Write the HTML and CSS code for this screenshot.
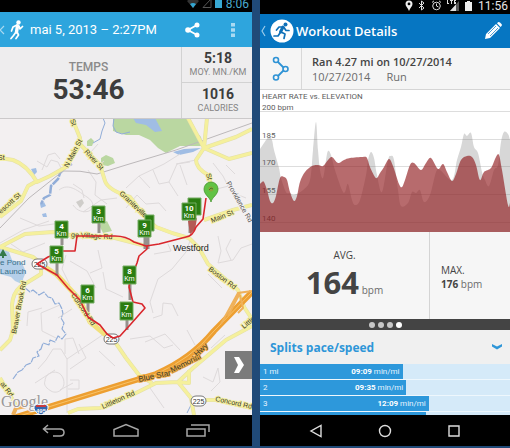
FILE: index.html
```html
<!DOCTYPE html>
<html lang="en">
<head>
<meta charset="utf-8">
<title>Workout screens</title>
<link rel="stylesheet" href="styles.css">
</head>
<body>
<main class="screens">
  <section class="phone phone-map" lang="fr">
    <div class="status status-map">
      <svg width="12" height="12" viewBox="0 0 12 12"><path d="M0 1a9 9 0 0 1 12 0L6 8z" fill="#333"/><path d="M3 4a5 5 0 0 1 6 0L6 8z" fill="#33a5d0"/></svg>
      <svg width="10" height="12" viewBox="0 0 10 12"><path d="M1 7.500 9 -1V7.500z" fill="none" stroke="#555"/></svg>
      <svg width="8" height="12" viewBox="0 0 8 12"><path d="M0 0h7v8H0z" fill="#38a8d4"/></svg>
      <span>8:06</span>
    </div>
    <header class="bar bar-map">
      <button class="icon back" aria-label="Retour"><svg width="6" height="12" viewBox="0 0 6 12"><path d="M4 2 0 6l4 4" fill="none" stroke="#a9d9f0" stroke-width="1.200"/></svg></button>
      <svg class="runner" width="14" height="20" viewBox="0 0 14 20"><circle cx="8.500" cy="2.500" r="2.200" fill="#fff"/><g fill="none" stroke="#fff" stroke-linecap="round" stroke-linejoin="round"><path d="M7.500 6 6.500 12" stroke-width="3.400"/><path d="m7 5-4 2-1.500 4M9 6l1 3 2.500-2.500M6 12l-2.500 3.500-2.500 3M7 12l1.500 3-2.500 3.500" stroke-width="1.700"/></g></svg>
      <h1 class="bar-title">mai 5, 2013 – 2:27PM</h1>
      <button class="icon share" aria-label="Partager"><svg width="15" height="16" viewBox="0 0 15 16"><path d="M12 3 3 8l9 5" fill="none" stroke="#fff" stroke-width="1.800"/><g fill="#fff"><circle cx="12" cy="3" r="2.500"/><circle cx="3" cy="8" r="2.800"/><circle cx="12" cy="13" r="2.500"/></g></svg></button>
      <button class="icon" aria-label="Menu"><svg width="4" height="16" viewBox="0 0 4 16"><path d="M0 1h4v3.500H0zM0 6.300h4v3.500H0zM0 11.600h4v3.500H0z" fill="#a9daf2"/></svg></button>
    </header>
    <div class="summary">
      <div class="summary-main"><span class="time-label">TEMPS</span><strong class="time">53:46</strong></div>
      <div class="summary-side">
        <div class="metric"><strong>5:18</strong><span>MOY. MN./KM</span></div>
        <div class="metric"><strong>1016</strong><span>CALORIES</span></div>
      </div>
    </div>
    <div class="map">
      <svg class="map-art" viewBox="0 118 252 297" role="img" aria-label="Westford">
        <path fill="#f3f0f1" d="M0 118h252v297H0z"/>
        <g fill="#bad7a1">
          <path d="M113 118h74l5 9 9 10 2 9-23 0-14 7-8-5-8-8-11-5-13 0-13-4z"/>
          <path d="m101 158 5-3 7 3 2 5-7 3-7-1zM87 141l4-3 3 3-2 5h-5zM99 225l8-4 5 10-9 2z"/>
        </g>
        <path fill="#cfcdca" d="m76 202 6-3 2 4-4 5z"/>
        <g fill="#a0bde4">
          <path d="M133 118h22l7 13-7 1-9-7-10-2zM173 152l11-3 17-1-8 4-14 3zM31 169l5-1 1 4-3 3zM40 204l4-2 2 4-5 2zM42 214l4-1 1 4h-4z"/>
          <path fill="#b4cfe9" d="m0 248 9 4 3 8 10 3 4 9-3 7 1 6-9-4-4-4-11-3z"/>
        </g>
        <g fill="none" stroke="#91add8" stroke-linejoin="round">
          <path stroke-width="2.500" d="m72 164-6 3-6 6-2 6-7 7-1 9-6 3-3 6" stroke-dasharray="9 1"/>
          <path stroke-width="1.200" d="m24 287 6 5 3-2 6 5 5-3 4 5 4 1 3 6 4-1 3 6 1 5-2 4 3 5-2 6 4 5-4 5-4-3-3 6-5-2-1 5-6-2-2 6-4 3 2 4-6 2-2 5-5 2-4 5-4 2-5 7" stroke-dasharray="8 1"/>
          <path stroke-width="1" d="m103 118 2 5-3 8-2 8-7 4M114 118l-1 8 3 6 6 2 8-2M187 413l4-8 1-9"/>
        </g>
        <g fill="none" stroke="#dedadb" stroke-width="1">
          <path d="m37 161 10 6 4-7 7 2 4 8M42 170l6-15 7-2 5 6M98 144l-8 9-6-2M90 160l9 5 5-4M59 190c10-8 20 2 28 7s7 12 2 14-12 0-16-6M88 170l8 12-1 13 12 9M73 184l9 6 2 8M83 212l18-12 16-2M126 188l13-12 25-12 16-10M139 176l11 12M153 170l6 14 10-2 9 14M169 182l8-18 13-2M126 208l11-13 9 9 13-1 7 8M180 165l7 20M196 160l-20 4M213 163l10 13 8 16 15 6M226 165l9 9M229 186l-17 4M218 236l3 15-3 12 15-3 8-12 11-4M231 239l-5 10 5 11M191 238l-5 14-14 17-14 10-8 23 3 11M168 244l3 7-17 3M208 274l14 14M153 318l9-3 1-12 9 1 6 12M0 243l23-13 26-9M20 218l19 8 22-3M11 244l12 8 22-9M66 255l-4 14 8 16M70 261l17 10 9 17M98 250l4 18-12 5M60 305l-19 8 1 18 14 7M27 326l1-14 14-4M72 309l-14 9M103 272l3 17 17 8"/>
          <path d="M104 334 67 359l-6-10-8 0-7 11-8 9M67 359l0 54M65 354v-15l8-1 6 16M45 381c0-9 14-13 18-3s-5 17-12 13-7-8-6-10M79 344l7 14-16 11M70 380h9v9H68M130 339l20-3 14 12 9-3M145 342l20-8 15 16M99 351l16 15M195 345l-8-15M203 377l10 5 5-14 2 14-9 9M150 388l14 20M211 348l14-13M60 390l13-7M55 370l-20 13"/>
        </g>
        <path fill="none" stroke="#bcb8ba" d="m0 228 29-30 34-27q17-1 34 3l29-9 50-15 76-27"/>
        <g class="roads-casing"><use href="#roads"/></g>
        <g class="roads">
          <g id="roads">
            <path d="m72 118 8 20-2 10-12 19-16 9-13 6q-10-17-24-22l-13-2M37 181l-9 5-7 15-21 16"/>
            <path d="m79 143 21 22 5 16q3 9 25 16l7 9 9 12 10 9q17 7 33 11l10 10 9 16 30 26 6 17 8 12"/>
            <path d="m188 118 16 30-8 12q0 8 12 15l3 9 0 12M207 118l-3 30 25 11 23-6M204 148l32-11 16-8M204 220l29-10 19-5"/>
            <path d="m0 247 25-13 28-2 22 4 40 2 31 8M0 247l33 10q9 6 8 17l-21 13q-7 6-8 18l1 25-3 10-10 10"/>
            <path d="m68 413 10-4 22-1 30-12 26-13 22-1 15-14 33-28 26-14M126 358l-13-19M126 358l13 17 13 8M189 370v13l-11-1 13 16 3 17M191 400l25 0 36 8M0 378l17 29"/>
          </g>
        </g>
        <path class="concord" d="m39 263 18 12 23 25 10 22 17 14"/>
        <g fill="none" stroke="#efb15a" stroke-width="4">
          <path d="m13 415 3-7 10-2"/>
          <path stroke="#ed9f31" stroke-width="6" d="m16 417 110-34 30-9q35-15 58-43l38-39"/>
          <path stroke="#f7c36a" stroke-width="1" d="m16 417 110-34 30-9q35-15 58-43l38-39"/>
          <path stroke-width="2" d="m221 324 17-31 14-2M228 316l12-23M240 295l3 13-5 5"/>
        </g>
        <g fill="none" stroke="#96918d" stroke-width="3"><path d="M99 223v10M62 238v7M57 262v14M88 303v13M127 319v11M130 284v16M145 237v12M148 232v17M190 219v14"/></g>
        <path fill="#b45a55" d="m188 221 9-3-2 12-5 4z"/>
        <g class="map-text street">
          <text transform="translate(68 168) rotate(-62)">N Main St</text>
          <text transform="translate(84 152) rotate(48)">River St</text>
          <text transform="translate(1 214) rotate(-42)">escott St</text>
          <text transform="translate(-2 160)">St</text><text transform="translate(70 120) rotate(70)">St</text>
          <text transform="translate(119 194) rotate(43)">Graniteville</text>
          <text transform="translate(212 223) rotate(-22)">Main St</text>
          <text transform="translate(206 174) rotate(75)">St</text>
          <text transform="translate(71 237) rotate(3)">ge Village Rd</text>
          <text transform="translate(208 270) rotate(37)">Boston Rd</text>
          <text transform="translate(16 334) rotate(-79)">Beaver Brook Rd</text>
          <text transform="translate(71 295) rotate(56)">Concord Rd</text>
          <text transform="translate(0 384) rotate(53)">at Rd</text>
          <text transform="translate(103 409) rotate(-24)">Littleton Rd</text>
          <text transform="translate(215 401) rotate(12)">Concord Rd</text>
          <text transform="translate(244 329) rotate(-40)">Little</text>
          <text class="hwy" transform="translate(139 382) rotate(-12)">Blue Star</text>
          <text class="hwy" transform="translate(172 373) rotate(-27)">Memorial</text>
          <text class="hwy" transform="translate(197 357) rotate(-43)">Hwy</text>
          <text class="minor" transform="translate(226 183) rotate(60)">Providence Rd</text>
        </g>
        <g class="shield">
          <rect x="32" y="259" width="15" height="10" rx="5"/><text x="39.500" y="267">225</text>
          <rect x="104" y="334" width="15" height="10" rx="5"/><text x="111.500" y="342">225</text>
          <rect x="191" y="396" width="15" height="10" rx="5"/><text x="198.500" y="404">225</text>
        </g>
        <path class="route" d="M206 198 203 219 196 227Q193 236 186 237L159 244 146 246 134 242Q126 236 115 236L77 236 75 251H63L48 257 37 264 57 275 68 288 80 300 88 317 100 325 107 334 113 338 120 336 130 325 145 308 142 304 133 302 129 287 130 280 137 263 139 256 147 249V246"/>
        <g class="map-text water"><text x="0" y="265">e Pond</text><text x="0" y="274">Launch</text></g>
        <path fill="#357a4b" d="m3 249 4 7H4v2H2v-2h-3z"/>
        <text class="map-text town" x="173" y="251">Westford</text>
        <text class="google" x="1" y="407">Google</text>
        <path fill="#3567ae" stroke="#fff" d="m34 406 3-2 4 1 4-1 3 2q1 6-7 9-8-3-7-9z"/><path fill="#c73d40" d="M36 405h10v2H36z"/><text class="interstate" x="41" y="413">495</text>
        <g class="flags">
          <path d="M188 198h13v17h-13zM145 215h9v16h-9z"/>
          <path d="M92 206h13v17H92zM55 221h13v17H55zM50 246h13v17H50zM81 285h13v18H81zM120 302h13v18h-13zM123 266h13v18h-13zM138 220h13v17h-13zM182 203h14v17h-14z"/>
        </g>
        <g class="flag-text">
          <text x="98.500" y="214">3<tspan x="98.500" dy="7">Km</tspan></text>
          <text x="61.500" y="229">4<tspan x="61.500" dy="7">Km</tspan></text>
          <text x="56.500" y="254">5<tspan x="56.500" dy="7">Km</tspan></text>
          <text x="87.500" y="293">6<tspan x="87.500" dy="7">Km</tspan></text>
          <text x="126.500" y="310">7<tspan x="126.500" dy="7">Km</tspan></text>
          <text x="129.500" y="274">8<tspan x="129.500" dy="7">Km</tspan></text>
          <text x="144.500" y="228">9<tspan x="144.500" dy="7">Km</tspan></text>
          <text x="189" y="211">10<tspan x="189" dy="7">Km</tspan></text>
        </g>
        <path fill="#62c244" stroke="#46962f" stroke-width=".8" d="M211 202c-1-5-7-7-7-13a7 7 0 0 1 14 0c0 6-6 8-7 13z"/><circle cx="211" cy="189" r="2.500" fill="#8aa63a"/><path fill="none" stroke="#427c2b" d="m209 190 2-2 2 1"/>
        <path fill="#cbc9ca" d="M0 118h252v1H0z"/>
      </svg>
      <button class="next" aria-label="Suivant"><svg width="12" height="18" viewBox="0 0 12 18"><path d="M1 1h5l5 8-5 8H1l4-8z" fill="#fff"/></svg></button>
    </div>
    <nav class="nav nav-map">
      <button class="icon" aria-label="Back"><svg width="24" height="16" viewBox="0 0 24 16"><path d="M6 2 1.500 6 6 10M2 6h16q4 0 4 3.500T18 13h-7" fill="none" stroke="#a7a7a7" stroke-width="1.500"/></svg></button>
      <button class="icon" aria-label="Home"><svg width="26" height="16" viewBox="0 0 26 16"><path d="M1 13V6.500l12-5 12 5V13z" fill="none" stroke="#a7a7a7" stroke-width="1.500"/></svg></button>
      <button class="icon" aria-label="Recent apps"><svg width="24" height="16" viewBox="0 0 24 16"><path d="M1 6h18v7H1zM5 2h18v7" fill="none" stroke="#a7a7a7" stroke-width="1.500"/></svg></button>
    </nav>
  </section>

  <section class="phone phone-workout">
    <div class="status status-workout">
      <svg width="8" height="12" viewBox="0 0 8 12"><path fill="#eee" fill-rule="evenodd" d="M4 11C3 8 .500 6.500.500 4a3.500 3.500 0 0 1 7 0C7.500 6.500 5 8 4 11zM4 2.500a1.400 1.400 0 1 0 0 2.800 1.400 1.400 0 0 0 0-2.800z"/></svg>
      <svg width="8" height="12" viewBox="0 0 8 12"><path fill="none" stroke="#ddd" d="m1 3 5 5-2.500 2V1L6 3 1 8"/></svg>
      <svg width="11" height="12" viewBox="0 0 11 12"><g fill="none" stroke="#ddd"><circle cx="5.500" cy="6" r="3.800"/><path d="M5.500 3.500V6l2 1M1 2.500 3 .800M10 2.500 8 .800"/></g></svg>
      <svg width="13" height="12" viewBox="0 0 13 12"><path fill="#555" d="M12 1v10H3z"/><path fill="#ddd" d="M9 4.500V11H3zM0 0h1v3h1v1H0zM3 0h3v1H5v3H4V1H3zM7 0h2v1H8v1h1v2H7z"/></svg>
      <svg width="8" height="12" viewBox="0 0 8 12"><path fill="#eee" d="M0 2h2V1h3v1h2v9H0z"/></svg>
      <span>11:56</span>
    </div>
    <header class="bar bar-workout">
      <button class="icon back" aria-label="Back"><svg width="6" height="12" viewBox="0 0 6 12"><path d="M5 1 2 6l3 5" fill="none" stroke="#9acbea" stroke-width="1.200"/></svg></button>
      <svg class="logo" width="24" height="24" viewBox="0 0 24 24"><circle cx="12" cy="12" r="11.500" fill="#fff"/><circle cx="15.500" cy="5.500" r="2" fill="#0f70b8"/><g fill="none" stroke="#0f70b8" stroke-linejoin="round" stroke-linecap="round"><path d="m13 8-2.500 5" stroke-width="3"/><path d="M13 8H9l-2.500 3M14 8.500l2 3h3M11 13l4 2-1 4.500M10 14l-2 3H4" stroke-width="1.700"/></g></svg>
      <h1 class="bar-title">Workout Details</h1>
      <button class="icon" aria-label="Edit"><svg width="18" height="18" viewBox="0 0 18 18"><path fill="#fff" d="m1 17 1-5L12 2l4 4L6 16zM13 1.200l1-1q1-.5 2 .3l1.500 1.500q.8 1 0 2l-1 1z"/><path d="m4 12 8-8M6 14l8-8" stroke="#0676c2" stroke-width=".7"/></svg></button>
    </header>
    <div class="workout">
      <div class="workout-icon"><svg width="18" height="26" viewBox="0 0 18 26"><path d="m5 5 8 8-8 8" fill="none" stroke="#2f93d5" stroke-width="1.800"/><g fill="#f5f5f5" stroke="#2f93d5" stroke-width="1.600"><circle cx="4" cy="4" r="2.500"/><circle cx="13.500" cy="13" r="2.500"/><circle cx="4" cy="21.500" r="2.500"/></g></svg></div>
      <div class="workout-text"><strong>Ran 4.27 mi on 10/27/2014</strong><p><span>10/27/2014</span><span>Run</span></p></div>
    </div>
    <svg class="chart" viewBox="260 90 250 142" role="img" aria-label="Heart rate vs. elevation">
      <path id="elevation" class="elevation"/>
      <path class="grid" d="M260 111.500h250M260 139.500h250M260 166.500h250M260 194.500h250M260 222.500h250"/>
      <g class="chart-text">
        <text x="262" y="99">HEART RATE vs. ELEVATION</text><text x="262" y="110">200 bpm</text>
        <text x="262" y="138">185</text><text x="262" y="165">170</text><text x="262" y="193">155</text><text x="262" y="221">140</text>
      </g>
      <path id="heart" class="heart"/>
    </svg>
    <div class="rates">
      <div class="avg"><span class="rate-label">AVG.</span><p><strong>164</strong> <span>bpm</span></p></div>
      <div class="max"><span class="rate-label">MAX.</span><p><strong>176</strong> <span>bpm</span></p></div>
    </div>
    <div class="dots"><i></i><i></i><i></i><i class="on"></i></div>
    <button class="splits-title"><span>Splits pace/speed</span><svg width="10" height="8" viewBox="0 0 10 8"><path d="m0 1 5 2.500L10 1v2.500L5 6.500 0 3.500z" fill="#2e96d8"/></svg></button>
    <ol class="splits">
      <li><div class="split-bar" style="width:57%"><span>1 mi</span><p><b>09:09</b> min/mi</p></div></li>
      <li><div class="split-bar" style="width:58.5%"><span>2</span><p><b>09:35</b> min/mi</p></div></li>
      <li><div class="split-bar" style="width:67.5%"><span>3</span><p><b>12:09</b> min/mi</p></div></li>
      <li class="peek"><div class="split-bar" style="width:66.2%"></div></li>
    </ol>
    <nav class="nav nav-workout">
      <button class="icon" aria-label="Back"><svg width="24" height="16" viewBox="0 0 24 16"><path d="M17 2.500v11L7 8z" fill="none" stroke="#ddd" stroke-width="1.400"/></svg></button>
      <button class="icon" aria-label="Home"><svg width="24" height="16" viewBox="0 0 24 16"><circle cx="12" cy="8" r="5.500" fill="none" stroke="#ddd" stroke-width="1.400"/></svg></button>
      <button class="icon" aria-label="Recent apps"><svg width="24" height="16" viewBox="0 0 24 16"><path d="M7 3h10v10H7z" fill="none" stroke="#ddd" stroke-width="1.400"/></svg></button>
    </nav>
  </section>
</main>
<script src="chart.js"></script>
</body>
</html>
```
FILE: styles.css
```css
* { box-sizing: border-box; }
body { margin: 0; background: #204a78; font-family: Roboto, "Liberation Sans", sans-serif; }
h1, p, ol { margin: 0; padding: 0; font-weight: inherit; }
button { border: 0; padding: 0; background: none; font: inherit; color: inherit; }
svg { display: block; flex: none; }
.icon { display: flex; flex: none; }

.screens { display: grid; grid-template-columns: 252fr 250fr; gap: 8px; padding-bottom: 2px; }
.phone { display: flex; flex-direction: column; min-width: 0; overflow: hidden; background: #f3f3f3; }
.phone-workout { font-family: "Open Sans", "Noto Sans", sans-serif; color: #444; }

.status { display: flex; justify-content: flex-end; background: #000; font-family: Roboto, sans-serif; font-size: 12px; }
.status-map { height: 12px; gap: 3px; padding-right: 3px; line-height: 8px; color: #4aabd0; }
.status-workout { height: 14px; gap: 5px; padding-right: 2px; line-height: 12px; color: #e6e6e6; }

.bar { display: flex; align-items: center; color: #fff; }
.bar-title { flex: 1; font-size: 13px; white-space: nowrap; }
.bar-map { height: 35px; padding-right: 17px; background: #2ea5dd; }
.bar-map .bar-title { margin-left: 6px; }
.runner { margin-left: 4px; }
.share { margin-right: 31px; }
.bar-workout { height: 34px; padding-right: 8px; background: #0676c2; }
.bar-workout .bar-title { font-weight: 600; margin-left: 2px; }
.logo { margin-left: 4px; }

.summary { display: flex; height: 71px; background: #eeedee; color: #3d3d3d; }
.summary-main { flex: 1; display: flex; flex-direction: column; align-items: center; justify-content: center; padding-right: 4px; }
.time-label { font-size: 12px; line-height: 14px; font-weight: 500; color: #8a8a8a; }
.time { font-size: 28px; line-height: 32px; }
.summary-side { width: 71px; display: flex; flex-direction: column; border-left: 1px solid #d2d2d2; }
.metric { flex: 1; display: flex; flex-direction: column; align-items: center; justify-content: center; padding-left: 2px; }
.metric + .metric { border-top: 1px solid #d2d2d2; }
.metric strong { font-size: 14px; line-height: 16px; }
.metric span { font-size: 9px; line-height: 13px; color: #858585; white-space: nowrap; }

.map { position: relative; }
.map-art { width: 100%; height: auto; }
.roads, .roads-casing { fill: none; stroke-linejoin: round; }
.roads-casing { stroke: #e3dfa8; stroke-width: 4px; }
.roads { stroke: #f5f09c; stroke-width: 3px; }
.concord { fill: none; stroke: #f2e17c; stroke-width: 5px; }
.route { fill: none; stroke: #d9262c; stroke-width: 1.6px; stroke-linejoin: round; }
.map-text { font-family: "Liberation Sans", sans-serif; font-size: 7px; fill: #3a3928; }
.street { stroke: #f5efa0; stroke-width: 2px; paint-order: stroke; }
.street .hwy { font-size: 8px; stroke: #efab45; }
.street .minor { stroke: #f3f0f1; fill: #555; }
.water { font-size: 8px; fill: #39718a; }
.town { font-size: 9px; fill: #222; }
.shield rect { fill: #fff; stroke: #777; }
.shield text { font: 7px "Liberation Sans", sans-serif; fill: #333; text-anchor: middle; }
.google { font: 16px "Liberation Serif", serif; fill: #9a9799; stroke: #f5f4f4; stroke-width: 2px; paint-order: stroke; }
.interstate { font: bold 6px "Liberation Sans", sans-serif; fill: #fff; text-anchor: middle; }
.flags { fill: #2b7d11; stroke: #74ad62; stroke-width: 1px; }
.flag-text { font: bold 8px Roboto, sans-serif; fill: #fff; text-anchor: middle; }
.flag-text tspan { font-weight: 400; font-size: 7px; }
.next { position: absolute; right: 0; bottom: 36px; width: 27px; height: 28px; display: flex; align-items: center; justify-content: center; background: #7b7b7b; }

.nav { display: flex; align-items: center; justify-content: space-between; height: 31px; padding: 0 42px; background: #000; }
.nav-workout { padding: 0 44px; }

.workout { display: flex; height: 42px; background: #f5f5f5; border-bottom: 1px solid #d5d5d5; }
.workout-icon { width: 42px; display: flex; align-items: center; justify-content: center; border-right: 1px solid #d8d8d8; }
.workout-text { padding: 6px 0 0 10px; font-size: 11px; line-height: 15px; white-space: nowrap; }
.workout-text strong { font-weight: 600; display: block; }
.workout-text p { display: flex; gap: 16px; color: #6b6b6b; }

.chart { width: 100%; height: auto; background: #fff; }
.elevation { fill: #d7d7d7; }
.heart { fill: rgba(145, 28, 30, .65); }
.grid { stroke: rgba(120, 120, 120, .25); }
.chart-text { font: 8px Roboto, sans-serif; fill: #5d5d5d; }

.rates { display: flex; height: 87px; background: #f6f6f6; }
.rates p { white-space: nowrap; }
.rates p span { color: #6c6c6c; }
.rate-label { font-size: 10px; line-height: 14px; }
.avg { width: 68%; display: flex; flex-direction: column; align-items: center; padding-top: 16px; border-right: 1px solid #d4d4d4; }
.avg p { font-size: 10px; line-height: 40px; }
.avg strong { font-size: 31px; }
.max { display: flex; flex-direction: column; padding: 31px 0 0 11px; }
.max p { font-size: 10px; line-height: 14px; }

.dots { display: flex; justify-content: center; align-items: center; gap: 3px; height: 11px; background: #444; }
.dots i { width: 6px; height: 6px; border-radius: 50%; background: #c8c8c8; }
.dots .on { background: #fff; }

.splits-title { display: flex; justify-content: space-between; align-items: center; height: 34px; padding: 0 8px 0 10px; background: #f0f0f0; color: #2e96d8; font-size: 12px; font-weight: 700; }
.splits { list-style: none; display: grid; gap: 1px; background: #eef7fd; font-family: Roboto, sans-serif; }
.splits li { height: 15px; background: #d5eaf9; }
.splits .peek { height: 3px; }
.split-bar { display: flex; justify-content: space-between; height: 100%; padding: 0 3px; background: #2d98db; color: #e5f4ff; font-size: 8px; line-height: 16px; white-space: nowrap; }
.split-bar b { color: #fff; }
```
FILE: chart.js
```js
const elevation = [[260,149],[264,143],[269,137],[272,140],[274,150],[279,168],[281,178],[286,192],[290,193],[294,195],[303,190],[310,180],[313,150],[316,122],[318,150],[320,170],[323,178],[326,160],[328,151],[331,155],[335,170],[342,190],[345,192],[348,184],[352,200],[355,205],[360,200],[366,175],[368,160],[371,152],[374,158],[377,175],[382,192],[388,160],[391,156],[394,160],[398,190],[401,206],[408,203],[412,192],[416,193],[420,190],[424,202],[430,195],[436,172],[440,170],[452,180],[457,160],[461,147],[464,134],[467,136],[471,133],[474,147],[478,153],[482,172],[485,180],[489,186],[494,170],[498,165],[501,142],[504,132],[508,134],[510,140]];
const heart = [[260,184],[262,182],[264,182],[267,190],[270,201],[273,203],[276,196],[280,178],[284,177],[287,180],[290,192],[294,201],[297,196],[300,182],[305,172],[312,166],[318,165],[323,166],[328,160],[332,157],[338,163],[344,160],[350,158],[363,157],[367,158],[370,167],[376,178],[380,173],[384,167],[389,159],[393,166],[399,184],[402,187],[405,180],[410,165],[414,163],[421,170],[426,163],[431,158],[438,169],[443,164],[447,172],[452,181],[456,174],[461,160],[467,156],[472,157],[476,165],[480,180],[484,172],[491,168],[496,157],[499,155],[502,170],[508,205],[510,203]];

// Closed area under a smooth curve through the points.
function area(points) {
  let d = `M260 232L${points[0]}`;
  for (let i = 0; i < points.length - 1; i++) {
    const p0 = points[Math.max(i - 1, 0)];
    const p1 = points[i];
    const p2 = points[i + 1];
    const p3 = points[Math.min(i + 2, points.length - 1)];
    const c1 = [p1[0] + (p2[0] - p0[0]) / 6, p1[1] + (p2[1] - p0[1]) / 6];
    const c2 = [p2[0] - (p3[0] - p1[0]) / 6, p2[1] - (p3[1] - p1[1]) / 6];
    d += `C${c1} ${c2} ${p2}`;
  }
  return d + 'V232Z';
}

document.getElementById('elevation').setAttribute('d', area(elevation));
document.getElementById('heart').setAttribute('d', area(heart));
```
